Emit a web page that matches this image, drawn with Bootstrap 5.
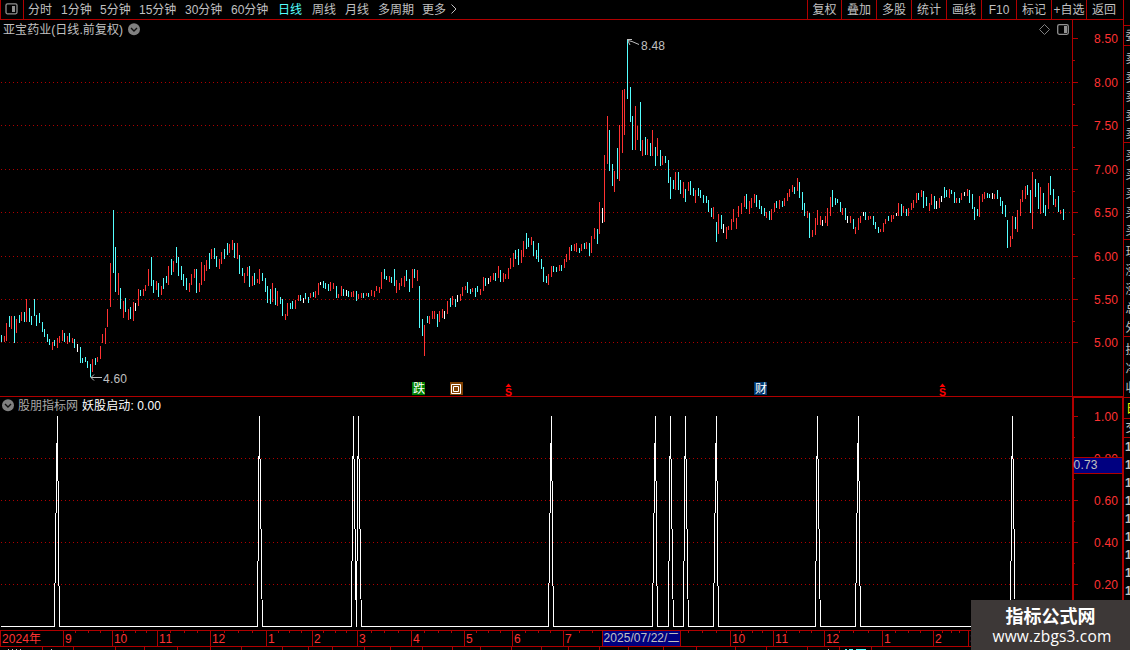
<!DOCTYPE html>
<html lang="zh-CN">
<head>
  <meta charset="UTF-8">
  <meta name="viewport" content="width=device-width, initial-scale=1">
  <title>亚宝药业 日线</title>
  <link href="https://cdn.jsdelivr.net/npm/bootstrap@5.3.0/dist/css/bootstrap.min.css" rel="stylesheet">
  <style>
    :root {
      --line: #b00000;
      --up: #ff3232;
      --down: #54ffff;
      --txt: #c0c0c0;
    }
    body {
      background: #000;
      color: var(--txt);
      font: 12px/14px "Liberation Sans", "Noto Sans CJK SC", sans-serif;
      overflow: hidden;
    }
    svg { display: block; flex: none; }
    svg text { font-size: 12px; fill: var(--txt); }
    .screen { width: 1130px; height: 650px; }
    .main-col { width: 1124px; border-right: 1px solid var(--line); }
    .topbar { height: 20px; border-bottom: 1px solid var(--line); border-left: 1px solid var(--line); }
    .panel-toggle { width: 23px; border-right: 1px solid var(--line); padding: 3px 0 0 4px; }
    .periods {
      display: grid;
      grid-template-columns: 33px 39px 39px 46px 46px 47px 34px 33px 33px 44px 28px 12px;
      padding: 3px 0 0 4px;
      white-space: nowrap;
    }
    .periods svg { margin-top: -1px; }
    .periods .on { color: var(--down); }
    .tools span {
      width: 35px;
      border-left: 1px solid var(--line);
      text-align: center;
      padding-top: 3px;
      white-space: nowrap;
    }
    .tools span:first-child { width: 34px; }
    .tools span:last-child { width: 37px; padding-right: 2px; }
    .main-chart { height: 377px; border-bottom: 1px solid var(--line); }
    .sub-chart { height: 233px; }
    .sub-chart .y-axis { border-top: 1px solid var(--line); border-right: 1px solid var(--line); }
    .axis text { fill: var(--up); }
    .quote-strip { overflow: hidden; }
    .brand-box {
      position: absolute;
      left: 971px;
      top: 600px;
      width: 159px;
      height: 50px;
      background: #3d3837;
      color: #fff;
      text-align: center;
    }
    .brand-name { font: bold 18px/18px "Noto Sans CJK SC", sans-serif; padding-top: 6px; }
    .brand-url { font: 15.500px/18px "Open Sans", sans-serif; letter-spacing: .18px; padding: 3px 0 0 3px; }
  </style>
</head>
<body>

  <div class="screen d-flex position-relative overflow-hidden">
    <div class="main-col d-flex flex-column flex-shrink-0">

      <!-- 顶部工具栏 -->
      <div class="topbar d-flex flex-shrink-0">
        <div class="panel-toggle">
          <svg width="13" height="12"><rect x="1" y=".8" width="11" height="10" rx="1.5" fill="none" stroke="#909090" stroke-width="1.3"/><rect x="7" y="3" width="3" height="6" fill="#909090"/></svg>
        </div>
        <div class="periods">
          <span>分时</span><span>1分钟</span><span>5分钟</span><span>15分钟</span><span>30分钟</span><span>60分钟</span>
          <span class="on">日线</span><span>周线</span><span>月线</span><span>多周期</span><span>更多</span>
          <svg width="8" height="14"><path d="M1.5 2.5 6 7 1.5 11.5" fill="none" stroke="#c0c0c0"/></svg>
        </div>
        <div class="tools d-flex ms-auto">
          <span>复权</span><span>叠加</span><span>多股</span><span>统计</span><span>画线</span><span>F10</span><span>标记</span><span>+自选</span><span>返回</span>
        </div>
      </div>

      <!-- K线图 -->
      <div class="main-chart d-flex flex-shrink-0">
        <svg id="kline" width="1072" height="376" viewBox="0 20 1072 376">
          <text x="3" y="34" textLength="120">亚宝药业(日线.前复权)</text>
          <circle cx="134" cy="29.3" r="6" fill="#808080"/>
          <path d="M131 28l3 3 3-3" fill="none" stroke="#101010" stroke-width="1.4"/>
          <path d="M1044.5 24.5l5 5-5 5-5-5z" fill="none" stroke="#808080"/>
          <rect x="1057.7" y="24.7" width="10.6" height="9.6" rx="1.5" fill="none" stroke="#909090" stroke-width="1.3"/>
          <rect x="1064" y="26" width="3" height="7" fill="#909090"/>
        </svg>
        <svg id="priceAxis" class="axis" width="51" height="376" viewBox="1072 20 51 376"></svg>
      </div>

      <!-- 指标副图 -->
      <div class="sub-chart d-flex flex-shrink-0">
        <svg id="signal" width="1072" height="233" viewBox="0 397 1072 233">
          <circle cx="8" cy="405.2" r="6" fill="#808080"/>
          <path d="M5 404l3 3 3-3" fill="none" stroke="#101010" stroke-width="1.4"/>
          <text x="18" y="409.5" style="fill:#a8a8a8">股朋指标网</text>
          <text x="82" y="409.5" textLength="79" style="fill:#fff">妖股启动: 0.00</text>
        </svg>
        <svg id="signalAxis" class="axis y-axis" width="51" height="233" viewBox="1072 398 50 232"></svg>
      </div>

      <!-- 时间轴 -->
      <svg id="timeAxis" class="axis" width="1123" height="20" viewBox="0 630 1123 20"></svg>
    </div>

    <!-- 右侧盘口 -->
    <svg id="quotes" class="quote-strip" width="6" height="650" viewBox="1124 0 6 650"></svg>

    <div class="brand-box">
      <div class="brand-name">指标公式网</div>
      <div class="brand-url">www.zbgs3.com</div>
    </div>
  </div>

  <script>
    // x 最高 最低 颜色(r 涨, c 跌, w 平)
    const bars = `1 335 342c,4 336 342r,6 323 341r,9 316 327c,11 316 329r,14 316 343c,16 319 333r,19 315 323c,21 312 321r,24 312 322c,
26 299 322r,29 308 322c,31 316 325c,34 299 316c,36 315 326c,39 313 323c,42 322 332c,44 329 337c,47 334 342c,49 339 345c,
52 342 350r,54 340 346c,57 338 348r,59 336 343r,62 330 341r,64 333 342c,67 336 344r,69 333 342c,72 338 343r,74 339 348c,
77 344 352w,80 347 363c,82 358 363c,85 357 362c,87 361 368c,90 364 377c,92 359 372r,95 358 365c,97 357 362r,100 346 359r,
102 334 343r,105 328 344r,107 309 327r,110 263 307r,113 210 273c,115 247 292c,118 273 295r,120 288 309c,123 301 318r,125 298 312c,
128 309 320r,130 307 319c,133 302 321r,135 303 311w,138 289 306r,140 290 296c,143 289 296r,145 285 291r,148 269 286r,151 257 286c,
153 280 293c,156 281 290r,158 283 297c,161 286 295r,163 278 289c,166 276 283c,168 266 285r,171 259 275c,173 261 272r,176 247 263c,
178 257 276c,181 266 280c,183 274 286c,186 278 290c,189 283 292r,191 274 285r,194 269 278r,196 269 293c,199 283 292r,201 262 285r,
204 265 281r,206 260 271r,209 253 269c,211 249 259r,214 248 259c,216 256 267c,219 259 269r,221 252 264r,224 249 259c,227 243 255c,
229 244 253r,232 240 250r,234 243 258c,237 243 259r,239 255 274c,242 268 276c,244 273 283r,247 267 276r,249 266 287c,252 276 286r,
254 273 285c,257 279 283r,259 269 284r,262 273 281c,265 278 292c,267 286 303c,270 289 304c,272 283 302r,275 288 305c,277 291 306r,
280 297 304c,282 299 316c,285 314 320r,287 303 316r,290 303 309c,292 301 309c,295 300 309r,298 295 301r,300 295 301c,303 298 303w,
305 293 299c,308 297 303c,310 293 298r,313 292 297c,315 291 298r,318 283 295r,320 282 285w,323 281 288c,325 283 289c,328 284 291c,
330 282 291r,333 283 289r,336 286 298c,338 294 298r,341 286 296r,343 289 296c,346 290 296w,348 291 297c,351 292 297r,353 291 297r,
356 291 301c,358 294 299r,361 293 298r,363 293 298c,366 293 296r,368 293 297c,371 290 296r,374 291 297r,376 286 291r,379 287 293r,
381 272 289r,384 269 279c,386 276 280c,389 276 282r,391 277 283c,394 269 286c,396 280 293r,399 283 290r,401 278 286r,404 276 287r,
406 270 281c,409 279 292c,412 269 288r,414 269 278c,417 270 281r,419 286 328c,422 319 336c,424 325 356r,427 316 323c,429 316 324r,
432 311 319r,434 311 319r,437 314 327c,439 311 322r,442 309 318r,444 311 319w,447 301 314r,450 298 307c,452 296 305r,455 299 307c,
457 295 302w,460 294 301r,462 287 296r,465 286 290r,467 282 293c,470 289 294c,472 288 292r,475 288 297c,477 286 292c,480 289 295r,
483 277 291r,485 278 286c,488 278 284w,490 276 282r,493 273 280r,495 273 281c,498 266 278r,500 270 282c,503 273 282r,505 274 279r,
508 268 279r,510 258 269r,513 253 267r,515 250 259c,518 249 265c,521 250 263r,523 241 257r,526 233 249c,528 238 247c,531 237 245r,
533 241 256c,536 250 259c,538 243 262c,541 259 269c,543 267 282c,546 276 283c,548 274 285r,551 266 277r,553 266 272c,556 267 272c,
559 265 271r,561 265 271c,564 259 268r,566 254 262r,569 247 260r,571 245 251c,574 244 251r,576 243 252r,579 248 253c,581 244 251r,
584 243 249c,586 242 249r,589 243 256c,591 236 253r,594 228 239r,597 229 244c,599 202 234r,602 208 223w,604 155 222r,607 116 164r,
609 130 171c,612 164 186c,614 171 192r,617 148 179c,619 125 181r,622 90 153r,624 89 135r,627 40 99c,630 87 122c,632 116 150c,
635 106 150r,637 126 140r,640 102 151c,642 140 156r,645 137 155c,647 139 155r,650 143 156c,652 130 156r,655 147 166c,657 138 156r,
660 150 166c,662 156 165r,665 156 163c,668 160 183c,670 177 199c,673 180 189c,675 172 190r,678 172 190c,680 180 194c,683 182 198r,
685 189 202c,688 182 191r,690 181 195c,693 188 196c,695 190 203r,698 188 196c,700 190 198c,703 195 203c,706 196 203c,708 200 212c,
711 208 217c,713 207 219r,716 222 242c,718 214 234r,721 215 229c,723 224 233w,726 227 239r,728 226 230r,731 219 230r,733 209 222r,
736 218 229r,738 206 217r,741 203 214r,744 196 207r,746 194 209c,749 201 214r,751 198 208r,754 194 203r,756 195 207c,759 200 209c,
761 206 214c,764 208 216c,766 212 218r,769 211 220c,771 209 220r,774 203 212r,776 201 208c,779 200 209r,782 201 207c,784 198 206r,
787 193 201r,789 189 197r,792 185 192r,794 187 194c,797 178 191r,799 182 198c,802 192 210c,804 203 216c,807 211 218r,809 213 238c,
812 230 237r,815 218 235r,817 210 225r,820 216 225r,822 220 226w,825 216 223r,827 208 226r,830 197 216r,832 190 207c,835 198 205c,
837 199 203c,840 202 212c,842 208 215r,845 208 220c,847 216 223w,850 216 223r,853 219 229c,855 227 234r,858 218 230r,860 216 223r,
863 212 216w,865 212 220c,868 216 220r,870 216 219r,873 216 225c,875 222 229c,878 227 233c,880 229 232r,883 223 232r,885 219 224r,
888 216 221c,891 215 222r,893 215 219r,896 213 216w,898 203 216r,901 204 216c,903 206 213r,906 209 216c,908 208 216r,911 203 210r,
913 200 208r,916 193 203r,918 193 200c,921 190 197r,923 191 208c,926 197 206c,929 203 211r,931 194 205r,934 196 209c,936 201 209w,
939 198 208r,941 196 202w,944 187 198c,946 190 197c,949 189 198r,951 190 194c,954 192 203c,956 198 203r,959 198 203c,961 193 200r,
964 192 196w,967 189 196r,969 190 203c,972 194 209c,974 207 220c,977 209 216c,979 196 217r,982 194 202r,984 192 199r,987 193 198c,
989 194 198c,992 193 199w,994 194 199r,997 190 199c,1000 197 206c,1002 201 214c,1005 205 217c,1007 220 248c,1010 236 247r,1012 216 239r,
1015 217 229c,1017 210 232r,1020 199 216r,1022 190 202r,1025 186 199r,1027 185 195c,1030 190 213c,1032 172 229r,1035 179 197c,1038 183 209c,
1040 187 214r,1043 193 213c,1045 205 216c,1048 183 209r,1050 176 195c,1053 189 205c,1055 199 207r,1058 196 212c,1060 210 214r,1063 209 220c`
      .split(",").map(s => {
        const m = s.trim().match(/(\d+) (\d+) (\d+)(\w)/);
        return { x: +m[1], hi: +m[2], lo: +m[3], k: m[4] };
      });

    const colors = { r: "#ff3232", c: "#54ffff", w: "#ffffff" };
    const line = "#b00000";

    function rect(x, y, w, h, fill) {
      return `<rect x="${x}" y="${y}" width="${w}" height="${h}" fill="${fill}"/>`;
    }
    function text(x, y, s, len, extra) {
      return `<text x="${x}" y="${y}" ${len ? `textLength="${len}"` : ""} ${extra || ""}>${s}</text>`;
    }
    function dots(y) {
      return `<path d="M1 ${y + .5}H1072" stroke="${line}" stroke-dasharray="1 3"/>`;
    }
    function add(id, html) {
      document.getElementById(id).insertAdjacentHTML("beforeend", html);
    }

    // K线
    let out = [82, 125, 169, 212, 256, 299, 342].map(dots).join("");
    bars.forEach(b => out += rect(b.x, b.hi, 1, b.lo - b.hi, colors[b.k]));
    out += `<path d="M628 40.5l4 1 7 3M627 39.5h5M628 41l2 4" fill="none" stroke="#c0c0c0"/>` + text(641, 50, "8.48", 24);
    out += `<path d="M91 377.5h11M94 374.5l-3 3 3 3" fill="none" stroke="#c0c0c0"/>` + text(103, 383, "4.60", 24);

    // 事件标记
    out += rect(412, 382, 13, 13, "#008000") + text(413, 393, "跌", 0, 'style="font-size:12px;fill:#fff"');
    out += rect(450, 382, 13, 13, "#804000") +
      `<path d="M451.5 384.5h9v9h-9zM453.5 386.5h5v5h-5z" fill="none" stroke="#fff"/>`;
    out += rect(754, 382, 13, 13, "#003870") + text(755, 393, "财", 0, 'style="font-size:12px;fill:#fff"');
    [508, 942].forEach(x => {
      out += `<path d="M${x + .5} 383.5l3 3.500h-6z" fill="#f00"/>` +
        text(x - 3, 395.5, "S", 0, 'style="font-size:10.5px;font-weight:bold;fill:#f00"');
    });
    add("kline", out);

    // 价格轴
    out = rect(1072, 20, 1, 376, line);
    [38, 82, 125, 169, 212, 256, 299, 342].forEach((y, i) => {
      out += rect(1073, y, 5, 1, line) + text(1094, y + 5, (8.5 - i * .5).toFixed(2), 24);
      if (i < 7) out += rect(1073, y + 22, 2, 1, line);
    });
    add("priceAxis", out);

    // 副图信号
    const hits = [57, 259, 353, 358, 551, 655, 670, 685, 716, 817, 858, 1012];
    out = [458, 500, 542, 584].map(dots).join("");
    out += `<polyline fill="none" stroke="#fff" shape-rendering="crispEdges" points="` +
      bars.map(b => `${b.x + .4},${hits.includes(b.x) ? 416 : 626.5}`).join(" ") + `"/>`;
    add("signal", out);

    out = rect(1072, 397, 2, 233, line);
    [416, 458, 500, 542, 584].forEach((y, i) => {
      out += rect(1074, y, 4, 1, line) + rect(1074, y + 21, 1, 1, line) + text(1094, y + 5, (1 - i * .2).toFixed(2), 24);
    });
    out += rect(1074, 457, 49, 17, line) + rect(1074, 458, 49, 15, "#000080") +
      text(1073.5, 469, "0.73", 24, 'style="fill:#c0c0c0"');
    add("signalAxis", out);

    // 时间轴
    const months = { 63: "9", 112: "10", 157: "11", 210: "12", 266: "1", 312: "2", 357: "3", 411: "4", 464: "5", 512: "6", 563: "7", 730: "10", 773: "11", 824: "12", 882: "1", 933: "2", 968: "3" };
    out = rect(0, 630, 1123, 1, line) + rect(0, 646, 1123, 1, line) + rect(0, 630, 1, 17, line);
    out += text(2, 643, "2024年", 39);
    const xs = Object.keys(months).map(Number);
    xs.forEach((x, i) => {
      out += rect(x, 630, 1, 17, line) + text(x + 2, 643, months[x], months[x].length * 6.6);
      const next = xs[i + 1];
      if (next && next - x < 70) {
        for (let j = 1; j < 4; j++) out += rect(Math.round(x + (next - x) * j / 4), 631, 1, 2, line);
      }
    });
    [579, 592, 688, 702, 716].forEach(x => out += rect(x, 631, 1, 2, line));
    out += rect(602, 630, 79, 17, line) + rect(603, 631, 77, 15, "#000080") +
      text(603.5, 642, "2025/07/22/二", 76, 'style="fill:#c0c0c0"');

    // 底部状态栏上沿
    [42, 73, 115, 144, 177, 210, 241, 282, 308, 332, 364, 390, 422, 452, 480, 511, 541, 568, 599, 628, 663, 696, 735, 766, 807, 839, 871].forEach(x => out += rect(x, 647, 1, 3, line));
    [8, 12, 16, 20, 51, 828].forEach(x => out += rect(x, 649, 1, 1, "#c0c0c0"));
    out += rect(845, 649, 2, 1, "#54ffff") + rect(849, 649, 4, 1, "#54ffff") + rect(856, 649, 10, 1, "#54ffff");
    add("timeAxis", out);

    // 盘口
    out = [25, 45, 142, 239, 336, 397, 418, 437].map(y => rect(1124, y, 6, 1, line)).join("");
    const names = { 40: "委", 63: "卖", 82: "卖", 101: "卖", 120: "卖", 138: "卖", 160: "买", 179: "买", 198: "买", 217: "买", 235: "买", 256: "现", 275: "涨", 294: "涨", 313: "总", 332: "外", 354: "换", 373: "净", 392: "收", 432: "交" };
    for (const y in names) out += text(1125.5, y, names[y]);
    out += text(1126, 413, "日", 0, 'style="fill:#ffff00"');
    for (let y = 451; y < 600; y += 18) out += text(1125, y, "1", 0, 'style="font-weight:bold"');
    add("quotes", out);
  </script>

  <script src="https://cdn.jsdelivr.net/npm/bootstrap@5.3.0/dist/js/bootstrap.bundle.min.js"></script>
</body>
</html>
